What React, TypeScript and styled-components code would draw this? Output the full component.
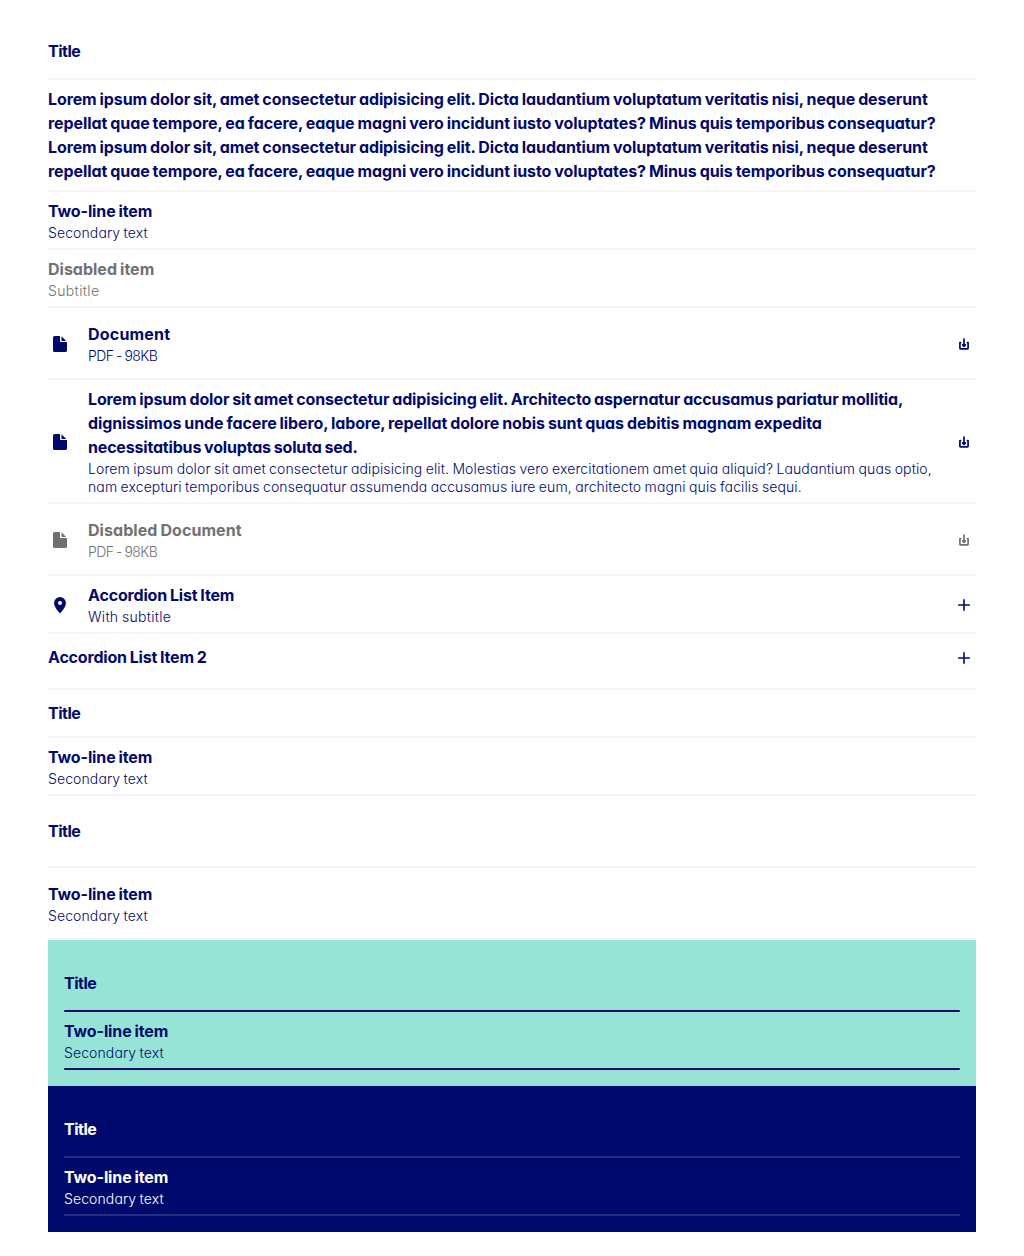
import React from "react";
import styled, { createGlobalStyle, css } from "styled-components";

type Tone = "light" | "mint" | "navy";

const NAVY = "#000a6c";
const GREY = "#717171";

const ruleColor = { light: "#f5f5f5", mint: NAVY, navy: "#26307f" };

const GlobalStyle = createGlobalStyle`
  * { box-sizing: border-box; }
  body {
    margin: 0;
    background: #fff;
    color: ${NAVY};
    font-family: Inter, "Liberation Sans", sans-serif;
    font-feature-settings: "cv11", "calt" 0;
  }
`;

const Page = styled.main`
  display: flex;
  flex-direction: column;
  padding: 24px 48px;
`;

const List = styled.ul`
  margin: 0;
  padding: 0;
  list-style: none;
`;

const Panel = styled.section<{ $tone: Tone }>`
  padding: 16px;
  background: ${(p) => (p.$tone === "mint" ? "#96e4d6" : NAVY)};
  color: ${(p) => (p.$tone === "mint" ? NAVY : "#fff")};
`;

const Item = styled.li<{ $height: number; $tone?: Tone; $disabled?: boolean; $top?: boolean }>`
  position: relative;
  display: flex;
  align-items: center;
  gap: 16px;
  height: ${(p) => p.$height}px;
  ${(p) => p.$top && css`padding-bottom: 8px;`}
  ${(p) => p.$disabled && css`color: ${GREY};`}

  &::after {
    content: "";
    position: absolute;
    left: 0;
    right: 0;
    bottom: 0;
    height: 2px;
    border-radius: 1px;
    background: ${(p) => ruleColor[p.$tone ?? "light"]};
  }
`;

const Texts = styled.div`
  flex: 1;
  min-width: 0;
  padding-bottom: 2px;
`;

const Line = styled.div<{ $track?: number }>`
  font-size: 16px;
  font-weight: 700;
  line-height: 24px;
  letter-spacing: ${(p) => p.$track ?? -0.1}px;
  word-spacing: -0.7px;
  white-space: nowrap;
`;

const SubTexts = styled.div`
  margin: 1px 0 -1px;
`;

const SubLine = styled.div<{ $track?: number }>`
  font-size: 14px;
  font-weight: 350;
  line-height: 18px;
  letter-spacing: ${(p) => p.$track ?? 0.11}px;
  word-spacing: -0.7px;
  white-space: nowrap;
`;

const Icon = styled.svg`
  flex: none;
  width: 24px;
  height: 24px;
  fill: currentColor;
`;

const DocumentIcon = () => (
  <Icon viewBox="0 0 24 24">
    <path d="M6.6 4H12v5.2c0 .5.3.8.8.8H19v8.4a1.6 1.6 0 0 1-1.6 1.6H6.6A1.6 1.6 0 0 1 5 18.4V5.6A1.6 1.6 0 0 1 6.6 4Z" />
    <path d="M13.5 4.3 18.2 9h-4.1a.6.6 0 0 1-.6-.6Z" />
  </Icon>
);

const DownloadIcon = () => (
  <Icon viewBox="0 0 24 24">
    <path
      d="M8.6 10.6H7.9V16.2a.7.7 0 0 0 .7.7h6.8a.7.7 0 0 0 .7-.7V10.6h-.7M12 7v7M10.6 12.9 12 14.3l1.4-1.4"
      fill="none"
      stroke="currentColor"
      strokeWidth="1.7"
      strokeLinecap="round"
      strokeLinejoin="round"
    />
  </Icon>
);

const PinIcon = () => (
  <Icon viewBox="0 0 24 24">
    <path
      fillRule="evenodd"
      d="M12 4a5.9 5.9 0 0 0-5.9 5.9c0 3.7 3.1 7.1 5.1 9.7a1 1 0 0 0 1.6 0c2-2.6 5.1-6 5.1-9.7A5.9 5.9 0 0 0 12 4Zm0 4a2 2 0 1 1 0 4 2 2 0 0 1 0-4Z"
    />
  </Icon>
);

const PlusIcon = () => (
  <Icon viewBox="0 0 24 24">
    <path d="M12 6.7v10.6M6.7 12h10.6" stroke="currentColor" strokeWidth="1.6" strokeLinecap="round" />
  </Icon>
);

type Run = [text: string, track?: number];

type RowProps = {
  height: number;
  lines: Run[];
  sub?: Run[];
  tone?: Tone;
  disabled?: boolean;
  top?: boolean;
  before?: React.ReactNode;
  after?: React.ReactNode;
};

const Row = ({ height, lines, sub, tone, disabled, top, before, after }: RowProps) => (
  <Item $height={height} $tone={tone} $disabled={disabled} $top={top}>
    {before}
    <Texts>
      {lines.map(([text, track], i) => (
        <Line key={i} $track={track}>{text}</Line>
      ))}
      {sub && (
        <SubTexts>
          {sub.map(([text, track], i) => (
            <SubLine key={i} $track={track}>{text}</SubLine>
          ))}
        </SubTexts>
      )}
    </Texts>
    {after}
  </Item>
);

const title: Run = ["Title", -0.5];

const TwoLine = ({ height = 58, tone }: { height?: number; tone?: Tone }) => (
  <Row height={height} tone={tone} lines={[["Two-line item", -0.12]]} sub={[["Secondary text"]]} />
);

const loremA: Run = ["Lorem ipsum dolor sit, amet consectetur adipisicing elit. Dicta laudantium voluptatum veritatis nisi, neque deserunt"];
const loremB: Run = ["repellat quae tempore, ea facere, eaque magni vero incidunt iusto voluptates? Minus quis temporibus consequatur?", -0.08];
const fileInfo: Run = ["PDF - 98KB", -0.58];

export default function App() {
  return (
    <>
      <GlobalStyle />
      <Page>
        <List>
          <Row height={56} lines={[title]} />
          <Row height={112} lines={[loremA, loremB, loremA, loremB]} />
          <TwoLine />
          <Row height={58} disabled lines={[["Disabled item", 0]]} sub={[["Subtitle", 0.36]]} />
          <Row height={72} before={<DocumentIcon />} after={<DownloadIcon />} lines={[["Document", 0.2]]} sub={[fileInfo]} />
          <Row
            height={124}
            before={<DocumentIcon />}
            after={<DownloadIcon />}
            lines={[
              ["Lorem ipsum dolor sit amet consectetur adipisicing elit. Architecto aspernatur accusamus pariatur mollitia,", -0.15],
              ["dignissimos unde facere libero, labore, repellat dolore nobis sunt quas debitis magnam expedita"],
              ["necessitatibus voluptas soluta sed.", -0.18],
            ]}
            sub={[
              ["Lorem ipsum dolor sit amet consectetur adipisicing elit. Molestias vero exercitationem amet quia aliquid? Laudantium quas optio,", 0.12],
              ["nam excepturi temporibus consequatur assumenda accusamus iure eum, architecto magni quis facilis sequi."],
            ]}
          />
          <Row height={72} disabled before={<DocumentIcon />} after={<DownloadIcon />} lines={[["Disabled Document", 0.05]]} sub={[fileInfo]} />
          <Row height={58} before={<PinIcon />} after={<PlusIcon />} lines={[["Accordion List Item", -0.17]]} sub={[["With subtitle", 0.3]]} />
          <Row height={56} top after={<PlusIcon />} lines={[["Accordion List Item 2", -0.19]]} />
        </List>
        <List>
          <Row height={48} lines={[title]} />
          <TwoLine />
        </List>
        <List>
          <Row height={72} lines={[title]} />
          <TwoLine height={72} />
        </List>
        <Panel $tone="mint">
          <List>
            <Row height={56} tone="mint" lines={[title]} />
            <TwoLine tone="mint" />
          </List>
        </Panel>
        <Panel $tone="navy">
          <List>
            <Row height={56} tone="navy" lines={[title]} />
            <TwoLine tone="navy" />
          </List>
        </Panel>
      </Page>
    </>
  );
}
